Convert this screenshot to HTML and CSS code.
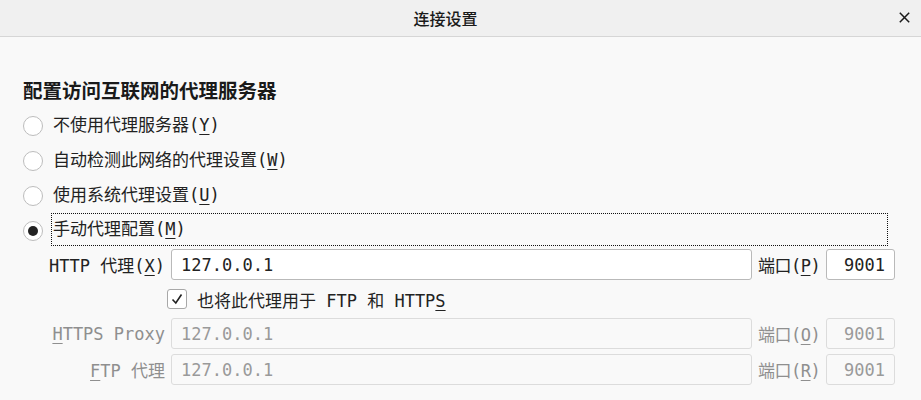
FILE: index.html
```html
<!DOCTYPE html>
<html lang="zh">
<head>
<meta charset="utf-8">
<title>连接设置</title>
<link rel="stylesheet" href="styles.css">
</head>
<body>
<header class="titlebar">
  <span class="title">连接设置</span>
  <button class="close" aria-label="关闭">
    <svg width="11" height="11" viewBox="0 0 11 11"><path d="M0.8 0.8 L10.2 10.2 M10.2 0.8 L0.8 10.2" stroke="#1a1a1a" stroke-width="1.5" fill="none"/></svg>
  </button>
</header>
<main class="content">
  <h1 class="heading">配置访问互联网的代理服务器</h1>
  <div class="radios">
    <label class="radio"><span class="dot"></span><span class="rtext">不使用代理服务器(<u>Y</u>)</span></label>
    <label class="radio"><span class="dot"></span><span class="rtext">自动检测此网络的代理设置(<u>W</u>)</span></label>
    <label class="radio"><span class="dot"></span><span class="rtext">使用系统代理设置(<u>U</u>)</span></label>
    <label class="radio checked"><span class="dot"></span><span class="rtext focus">手动代理配置(<u>M</u>)</span></label>
  </div>
  <div class="proxy-grid">
    <span class="flabel">HTTP 代理(<u>X</u>)</span>
    <span class="field">127.0.0.1</span>
    <span class="plabel">端口(<u>P</u>)</span>
    <span class="field port">9001</span>

    <label class="check"><span class="box"><svg width="14" height="14" viewBox="0 0 14 14"><path d="M2.5 7.5 L5.8 11 L11.5 2.5" stroke="#222" stroke-width="1.6" fill="none"/></svg></span><span>也将此代理用于 FTP 和 HTTP<u>S</u></span></label>

    <span class="flabel disabled"><u>H</u>TTPS Proxy</span>
    <span class="field off">127.0.0.1</span>
    <span class="plabel disabled">端口(<u>O</u>)</span>
    <span class="field port off">9001</span>

    <span class="flabel disabled"><u>F</u>TP 代理</span>
    <span class="field off">127.0.0.1</span>
    <span class="plabel disabled">端口(<u>R</u>)</span>
    <span class="field port off">9001</span>
  </div>
</main>
</body>
</html>
```

FILE: styles.css
```css
html, body {
  margin: 0;
  padding: 0;
  background: #f9f9f9;
}
body {
  width: 921px;
  height: 400px;
  overflow: hidden;
  font-family: "DejaVu Sans Mono", "Noto Sans CJK SC", monospace;
  font-size: 17px;
  color: #222;
}
u {
  text-decoration: underline;
  text-underline-offset: 3px;
}
.titlebar {
  height: 36px;
  background: #f0f0f0;
  border-bottom: 1px solid #d6d6d6;
  display: flex;
  align-items: center;
  justify-content: center;
  padding-right: 30px;
  position: relative;
}
.title {
  font-family: "Noto Sans CJK SC", sans-serif;
  font-size: 16px;
  font-weight: 500;
  color: #1a1a1a;
}
.close {
  position: absolute;
  right: 11px;
  top: 12px;
  width: 11px;
  height: 11px;
  padding: 0;
  border: 0;
  background: transparent;
  display: flex;
}
.content {
  padding: 40px 26px 0 23px;
}
.heading {
  margin: 0;
  font-family: "Noto Sans CJK SC", sans-serif;
  font-size: 19.5px;
  font-weight: 700;
  line-height: 26px;
  color: #1a1a1a;
}
.radios {
  margin-top: 5px;
  display: flex;
  flex-direction: column;
}
.radio {
  height: 35px;
  display: flex;
  align-items: center;
}
.dot {
  width: 18px;
  height: 18px;
  border: 1px solid #bdbdbd;
  border-radius: 50%;
  background: #fff;
  flex: none;
  display: flex;
  align-items: center;
  justify-content: center;
}
.checked .dot::after {
  content: "";
  width: 10px;
  height: 10px;
  border-radius: 50%;
  background: #222;
}
.rtext {
  margin-left: 9px;
  line-height: 31px;
  padding: 0 1px;
}
.rtext.focus {
  flex: 1;
  border: 1px dotted #111;
  margin-left: 8px;
  margin-right: 7px;
  margin-top: -3px;
}
.proxy-grid {
  margin-left: 17px;
  display: grid;
  grid-template-columns: 125px 1fr 62px 69px;
  column-gap: 6px;
  row-gap: 5px;
  align-items: center;
  margin-top: 1px;
}
.flabel {
  text-align: right;
  white-space: nowrap;
}
.plabel {
  white-space: nowrap;
  letter-spacing: -0.5px;
}
.disabled {
  color: #8f8f8f;
}
.field {
  height: 29px;
  border: 1px solid #b9b9b9;
  border-radius: 3px;
  background: #fff;
  display: flex;
  align-items: center;
  padding: 0 9px;
  white-space: nowrap;
}
.field.port {
  justify-content: flex-end;
}
.field.off {
  background: #f9f9f9;
  border-color: #dcdcdc;
  color: #9a9a9a;
}
.check {
  grid-column: 2 / 5;
  height: 28px;
  margin-left: -4px;
  display: flex;
  align-items: center;
  gap: 10px;
}
.box {
  width: 18px;
  height: 18px;
  border: 1px solid #a8a8a8;
  border-radius: 3px;
  background: #fff;
  display: flex;
  align-items: center;
  justify-content: center;
  flex: none;
}
```
